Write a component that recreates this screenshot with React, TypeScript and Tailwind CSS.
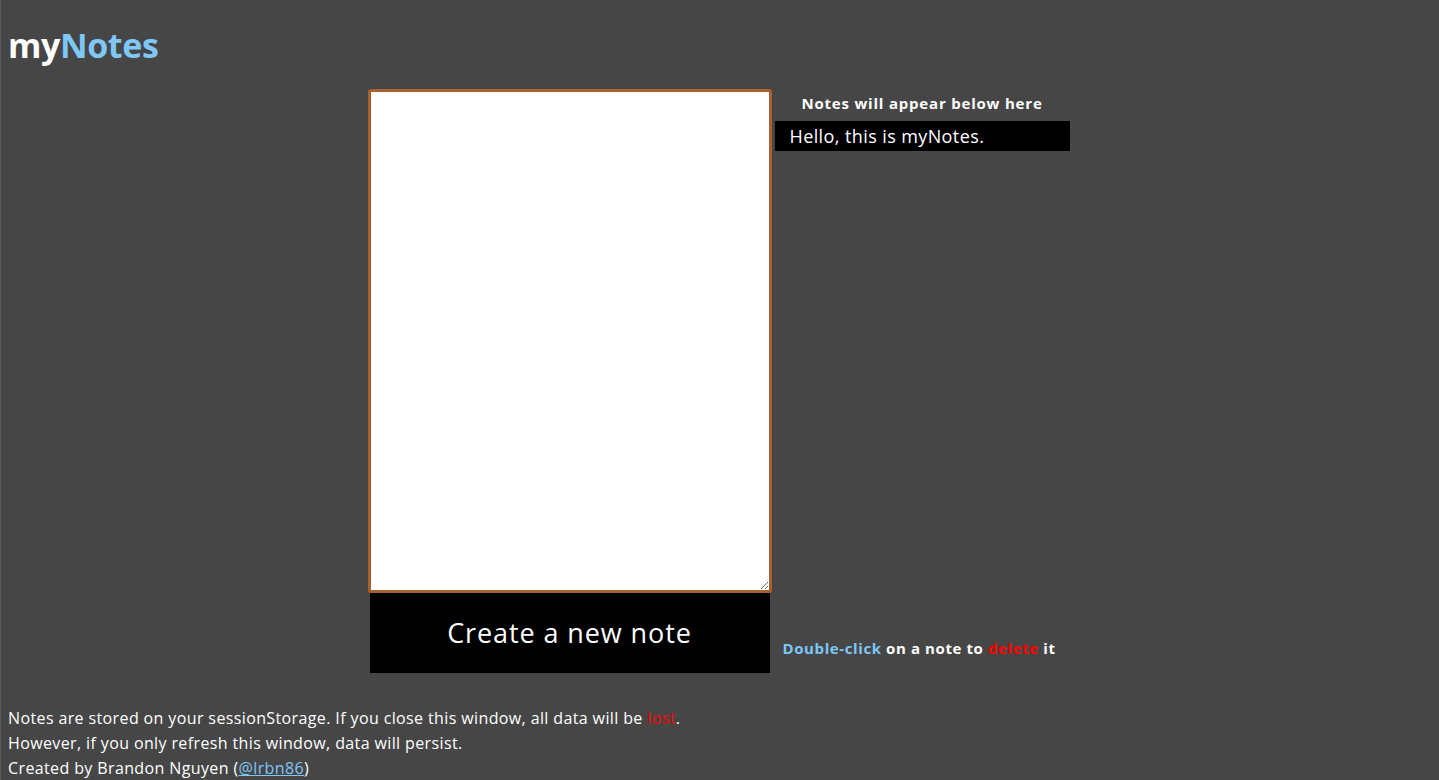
import { useState } from "react";

const font = { fontFamily: '"Open Sans", "Noto Sans", sans-serif' };

export default function App() {
  const [notes, setNotes] = useState<string[]>(["Hello, this is myNotes."]);
  const [text, setText] = useState("");

  return (
    <div
      className="min-h-[780px] bg-[#464646] text-white border-l border-[#5a5a5a] pl-[7px] pr-[10px]"
      style={font}
    >
      <h1 className="pt-[27px] pb-[26px] text-[34px] leading-[36px] font-bold tracking-[-0.4px]">
        my<span className="text-[#7ec7f6]">Notes</span>
      </h1>

      <div className="flex justify-center">
        <div className="flex flex-col w-[404px]">
          <textarea
            value={text}
            onChange={(e) => setText(e.target.value)}
            className="h-[504px] w-[404px] bg-white border-[3px] border-[#a9622b] rounded-[3px] text-black outline-none"
          />
          <button
            onClick={() => {
              if (text.trim()) setNotes([...notes, text]);
              setText("");
            }}
            className="mx-[2px] h-[80px] bg-black text-white text-[27px] tracking-[0.9px]"
          >
            Create a new note
          </button>
        </div>

        <div className="w-[295px] ml-[3px] flex flex-col">
          <p className="pt-[3px] h-[31px] mb-[1px] text-center text-[15px] font-bold tracking-[0.8px]">
            Notes will appear below here
          </p>
          <div className="flex-1 flex flex-col">
            {notes.map((n, i) => (
              <div
                key={i}
                onDoubleClick={() => setNotes(notes.filter((_, j) => j !== i))}
                className="h-[30px] bg-black pl-[15px] text-[18px] leading-[30px] tracking-[0.4px] cursor-pointer"
              >
                {n}
              </div>
            ))}
          </div>
          <p className="pl-[8px] mb-[14px] text-[15px] font-bold tracking-[0.6px]">
            <span className="text-[#7ec7f6]">Double-click</span> on a note to{" "}
            <span className="text-[#ff0000]">delete</span> it
          </p>
        </div>
      </div>

      <div className="pt-[33px] text-[16px] leading-[25px] tracking-[0.38px]">
        <p>
          Notes are stored on your sessionStorage. If you close this window, all data will be{" "}
          <span className="text-[#ff0000]">lost</span>.
        </p>
        <p>However, if you only refresh this window, data will persist.</p>
        <p>
          Created by Brandon Nguyen (
          <a href="#" className="text-[#7ec7f6] underline">
            @lrbn86
          </a>
          )
        </p>
      </div>
    </div>
  );
}
